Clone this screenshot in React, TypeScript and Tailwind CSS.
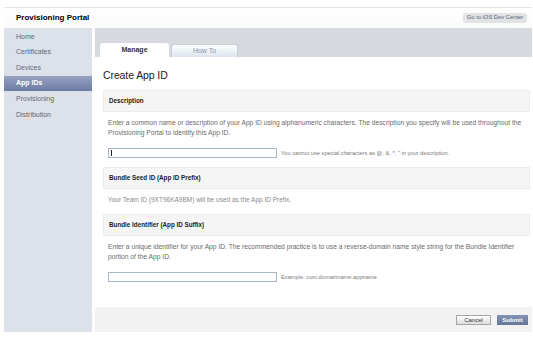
import React from 'react';

const navItems = ['Home', 'Certificates', 'Devices', 'App IDs', 'Provisioning', 'Distribution'];

const SectionHead = ({ title }: { title: string }) => (
  <div className="h-[22px] flex items-center pl-[5px] bg-[#f5f5f5] border border-[#ececec] text-[6.3px] font-bold text-[#222]">
    {title}
  </div>
);

const App = () => {
  return (
    <div className="w-[533px] h-[339px] bg-white pt-[7px] px-[4px] font-['Liberation_Sans',Arial,sans-serif] overflow-hidden">
      <div className="w-[528px]">
        {/* header */}
        <div className="h-[21px] border-t border-[#e4e4e4] bg-gradient-to-b from-white to-[#fafafa] flex items-center justify-between pl-[12px] pr-[5px]">
          <span className="text-[8px] font-bold text-black leading-none">Provisioning Portal</span>
          <button className="h-[10px] w-[64px] rounded-[3px] bg-[#e2e3e5] text-[5.8px] text-[#55607a] leading-none">
            Go to iOS Dev Center
          </button>
        </div>

        <div className="flex h-[304px] gap-[3px]">
          {/* sidebar */}
          <div className="w-[88px] bg-[#dde1ea] pt-[1px]">
            {navItems.map((item) =>
              item === 'App IDs' ? (
                <div
                  key={item}
                  className="h-[15.6px] flex items-center pl-[12px] text-[7px] font-bold text-white bg-gradient-to-b from-[#97a3c2] to-[#6c7ba1]"
                >
                  {item}
                </div>
              ) : (
                <div key={item} className="h-[15.6px] flex items-center pl-[12px] text-[7px] text-[#5f6877]">
                  {item}
                </div>
              )
            )}
          </div>

          {/* main */}
          <div className="flex-1 flex flex-col">
            <div className="h-[29px] bg-[#d6d9dd] flex items-end pl-[5px] gap-[2px]">
              <div className="w-[69px] h-[14px] bg-white rounded-t-[3px] flex items-center justify-center text-[7px] font-bold text-[#333]">
                Manage
              </div>
              <div className="w-[67px] h-[13px] rounded-t-[3px] bg-gradient-to-b from-white to-[#dce4f0] border border-b-0 border-[#c9d0db] flex items-center justify-center text-[7px] text-[#8a94a6]">
                How To
              </div>
            </div>

            <div className="pl-[8px] pr-[2px]">
              <h1 className="mt-[12px] text-[10.5px] leading-[12px] text-[#222] tracking-[-0.1px]">Create App ID</h1>

              <div className="mt-[9px]">
                <SectionHead title="Description" />
              </div>
              <p className="mt-[6px] pl-[5px] text-[6.7px] leading-[10px] text-[#6a6a6a]">
                Enter a common name or description of your App ID using alphanumeric characters. The description you specify will be used throughout the Provisioning Portal to identify this App ID.
              </p>
              <div className="mt-[10px] pl-[5px] flex items-center gap-[4px]">
                <div className="w-[169px] h-[10px] border border-[#a9b7c6] bg-white flex items-center pl-[2px]">
                  <div className="w-[1px] h-[6px] bg-[#222]" />
                </div>
                <span className="text-[5.7px] text-[#7a7a7a]">
                  You cannot use special characters as @, &amp;, *, " in your description.
                </span>
              </div>

              <div className="mt-[9px]">
                <SectionHead title="Bundle Seed ID (App ID Prefix)" />
              </div>
              <p className="mt-[6px] pl-[5px] text-[6.5px] leading-[10px] text-[#8a8a8a]">
                Your Team ID (9XT96KA9BM) will be used as the App ID Prefix.
              </p>

              <div className="mt-[9px]">
                <SectionHead title="Bundle Identifier (App ID Suffix)" />
              </div>
              <p className="mt-[6px] pl-[5px] text-[6.7px] leading-[10px] text-[#6a6a6a]">
                Enter a unique identifier for your App ID. The recommended practice is to use a reverse-domain name style string for the Bundle Identifier portion of the App ID.
              </p>
              <div className="mt-[10px] pl-[5px] flex items-center gap-[4px]">
                <div className="w-[169px] h-[10px] border border-[#a9b7c6] bg-white" />
                <span className="text-[5.7px] text-[#7a7a7a]">Example: com.domainname.appname</span>
              </div>
            </div>

            <div className="mt-auto h-[25px] bg-[#f2f2f2] flex items-center justify-end gap-[6px] pr-[4px]">
              <button className="w-[35px] h-[10px] border border-[#a6a6a6] bg-gradient-to-b from-white to-[#dcdcdc] text-[6px] text-[#333] leading-none">
                Cancel
              </button>
              <button className="w-[31px] h-[10px] bg-gradient-to-b from-[#8394b4] to-[#63769a] text-[6px] font-bold text-white leading-none">
                Submit
              </button>
            </div>
          </div>
        </div>
      </div>
    </div>
  );
};

export default App;
